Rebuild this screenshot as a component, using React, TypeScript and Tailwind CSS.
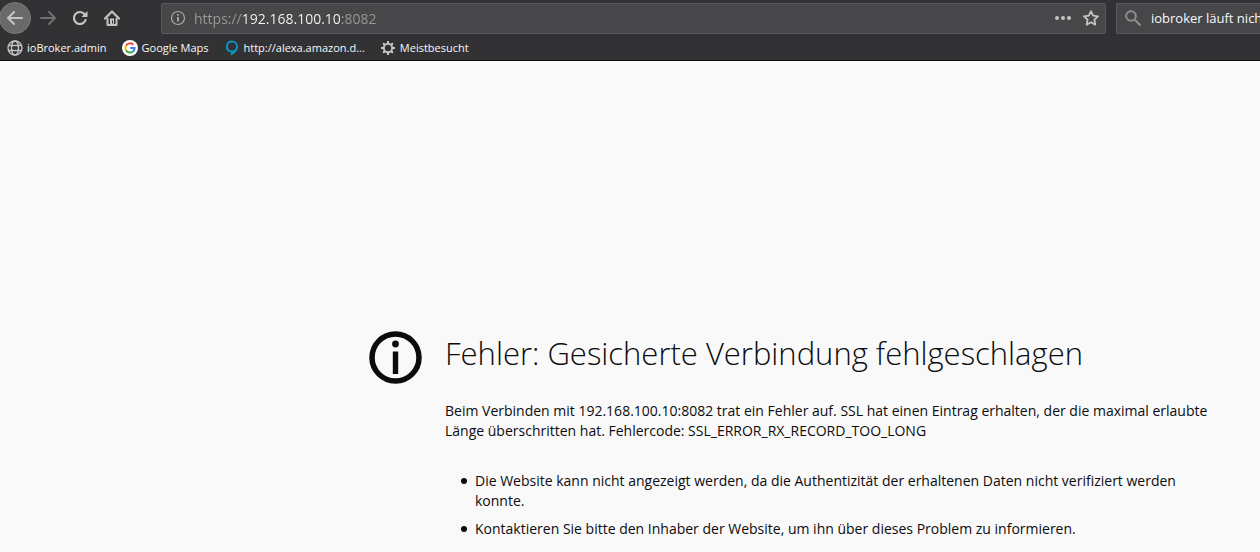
import type { ReactNode } from "react";

interface Bookmark {
  label: string;
  href: string;
  icon: ReactNode;
}

function BackIcon() {
  return (
    <svg viewBox="0 0 16 16" className="size-4" fill="none" stroke="currentColor" strokeWidth="2" strokeLinecap="round" strokeLinejoin="round">
      <path d="M15 8H1.5M7 2 1 8l6 6" />
    </svg>
  );
}

function ForwardIcon() {
  return (
    <svg viewBox="0 0 16 16" className="size-4" fill="none" stroke="currentColor" strokeWidth="2" strokeLinecap="round" strokeLinejoin="round">
      <path d="M1 8h13.5M9 2l6 6-6 6" />
    </svg>
  );
}

function ReloadIcon() {
  return (
    <svg viewBox="0 0 16 16" className="size-4">
      <path d="M12.6 4.2A6 6 0 1 0 13.6 10" fill="none" stroke="currentColor" strokeWidth="2.2" strokeLinecap="round" />
      <path d="M15.5 1v5.5a.6.6 0 0 1-.6.6H9.4z" fill="currentColor" />
    </svg>
  );
}

function HomeIcon() {
  return (
    <svg viewBox="0 0 16 16" className="size-4">
      <path d="M1 8.500 8 1.500l7 7" fill="none" stroke="currentColor" strokeWidth="2.200" strokeLinecap="round" strokeLinejoin="round" />
      <path d="M3.500 8v7h9V8" fill="none" stroke="currentColor" strokeWidth="2" strokeLinejoin="round" />
      <path d="M6 8.500h4V15H6z" fill="currentColor" />
      <path d="M8 10.500h1v3H8z" fill="#323234" />
    </svg>
  );
}

function InfoIcon() {
  return (
    <svg viewBox="0 0 16 16" className="size-4 shrink-0" fill="none" stroke="currentColor">
      <circle cx="8" cy="8" r="6.500" strokeWidth="1.200" />
      <path d="M8 7v4.500" strokeWidth="1.800" />
      <circle cx="8" cy="4.800" r="1" fill="currentColor" stroke="none" />
    </svg>
  );
}

function StarIcon() {
  return (
    <svg viewBox="0 0 16 16" className="size-4" fill="none" stroke="currentColor" strokeWidth="1.800" strokeLinejoin="round">
      <path d="m8 1.200 2.100 4.400 4.900.7-3.600 3.400.9 5L8 12.300l-4.300 2.400.9-5L1 6.300l4.900-.7z" />
    </svg>
  );
}

function SearchIcon() {
  return (
    <svg viewBox="0 0 16 16" className="size-4 shrink-0" fill="none" stroke="currentColor" strokeWidth="2" strokeLinecap="round">
      <circle cx="6" cy="6" r="4.800" />
      <path d="m9.800 9.800 5.200 5.200" />
    </svg>
  );
}

function GlobeIcon() {
  return (
    <svg viewBox="0 0 16 16" className="size-4 text-[#c4c4c5]" fill="none" stroke="currentColor" strokeWidth="1.400">
      <circle cx="8" cy="8" r="7" />
      <ellipse cx="8" cy="8" rx="3.500" ry="7" />
      <path d="M1.600 5.500h12.800M1.600 10.500h12.800" />
    </svg>
  );
}

function GoogleIcon() {
  return (
    <svg viewBox="0 0 16 16" className="size-4" fill="none" strokeWidth="2">
      <circle cx="8" cy="8" r="8" fill="#fff" />
      <path d="M11.300 4.700A4.600 4.600 0 0 0 4 5.700" stroke="#ea4335" />
      <path d="M4 5.700a4.600 4.600 0 0 0 0 4.600" stroke="#fbbc05" />
      <path d="M4 10.300a4.600 4.600 0 0 0 6.900 1.200" stroke="#34a853" />
      <path d="M10.900 11.500a4.600 4.600 0 0 0 1.700-3.400H8.200" stroke="#4285f4" />
    </svg>
  );
}

function AlexaIcon() {
  return (
    <svg viewBox="0 0 16 16" className="size-4">
      <path
        d="M8 .5a6 6 0 0 0-2.200 11.600c.8.300 1.200.8 1.200 1.500V15.500c3.500-1.600 7-4.800 7-9A6 6 0 0 0 8 .5zm0 2a4 4 0 1 1 0 8 4 4 0 0 1 0-8z"
        fill="#0a93bd"
        fillRule="evenodd"
      />
    </svg>
  );
}

function GearIcon() {
  return (
    <svg viewBox="0 0 16 16" className="size-4 text-[#c4c4c5]" fill="none" stroke="currentColor">
      <circle cx="8" cy="8" r="4.200" strokeWidth="2" />
      <path
        d="M8 1v2.500M8 12.500V15M1 8h2.500M12.500 8H15M3.100 3.100l1.700 1.700M11.200 11.200l1.700 1.700M3.100 12.900l1.700-1.700M11.200 4.800l1.700-1.700"
        strokeWidth="2"
      />
    </svg>
  );
}

const BOOKMARKS: Bookmark[] = [
  { label: "ioBroker.admin", href: "#admin", icon: <GlobeIcon /> },
  { label: "Google Maps", href: "#maps", icon: <GoogleIcon /> },
  { label: "http://alexa.amazon.d...", href: "#alexa", icon: <AlexaIcon /> },
  { label: "Meistbesucht", href: "#most-visited", icon: <GearIcon /> },
];

const HINTS = [
  "Die Website kann nicht angezeigt werden, da die Authentizität der erhaltenen Daten nicht verifiziert werden konnte.",
  "Kontaktieren Sie bitte den Inhaber der Website, um ihn über dieses Problem zu informieren.",
];

function Toolbar() {
  return (
    <div className="flex h-9 items-center text-[#c4c4c5]">
      <button aria-label="Zurück" className="-ml-px flex size-8 shrink-0 items-center justify-center rounded-full border border-[#7b7b7d] bg-[#69696a]">
        <BackIcon />
      </button>
      <button aria-label="Vor" disabled className="ml-px flex size-8 shrink-0 items-center justify-center text-[#707072]">
        <ForwardIcon />
      </button>
      <button aria-label="Neu laden" className="flex size-8 shrink-0 items-center justify-center">
        <ReloadIcon />
      </button>
      <button aria-label="Startseite" className="flex size-8 shrink-0 items-center justify-center">
        <HomeIcon />
      </button>

      <div className="ml-[33px] flex h-[31px] min-w-0 flex-1 items-center rounded-xs border border-[#5a5a5c] bg-[#474749] pl-2">
        <span className="text-[#aaaaab]">
          <InfoIcon />
        </span>
        {/* scheme and port are dimmed, only the host is bright */}
        <input
          aria-label="Adresse"
          defaultValue="https://192.168.100.10:8082"
          className="ml-2 min-w-0 flex-1 bg-[linear-gradient(to_right,#9a9a9b_47px,#f9f9fa_47px,#f9f9fa_147px,#9a9a9b_147px)] bg-clip-text pt-0.5 text-sm text-transparent outline-none"
        />
        <button aria-label="Seitenaktionen" className="flex h-6 w-7 items-center justify-center">
          <svg viewBox="0 0 16 16" className="size-4" fill="currentColor">
            <circle cx="2" cy="8" r="2" />
            <circle cx="8" cy="8" r="2" />
            <circle cx="14" cy="8" r="2" />
          </svg>
        </button>
        <button aria-label="Lesezeichen hinzufügen" className="flex h-6 w-7 items-center justify-center">
          <StarIcon />
        </button>
      </div>

      <div className="ml-2.5 flex h-[31px] w-36 shrink-0 items-center rounded-l-xs border border-r-0 border-[#5a5a5c] bg-[#474749] pl-2">
        <span className="text-[#8f8f91]">
          <SearchIcon />
        </span>
        <input aria-label="Suchen" defaultValue="iobroker läuft nicht" className="ml-2.5 min-w-0 flex-1 pt-0.5 text-[13px] text-[#f9f9fa] outline-none" />
      </div>
    </div>
  );
}

export default function App() {
  return (
    <div className="min-h-screen overflow-hidden bg-[#f9f9fa] font-['Open_Sans','Noto_Sans',sans-serif] text-[#0c0c0d]">
      <header className="border-b border-[#0c0c0d] bg-[#323234]">
        <Toolbar />
        <nav className="flex h-6 items-center gap-[15px] pl-[7px]">
          {BOOKMARKS.map((b) => (
            <a key={b.label} href={b.href} className="flex items-center gap-1 text-[11px] whitespace-nowrap text-[#f9f9fa]">
              {b.icon}
              {b.label}
            </a>
          ))}
        </nav>
      </header>

      <main className="flex gap-[23px] pt-[270px] pr-10 pl-[369px]">
        <svg viewBox="0 0 53 53" className="size-[53px] shrink-0">
          <circle cx="26.500" cy="26.500" r="23.500" fill="none" stroke="#0c0c0d" strokeWidth="5.500" />
          <circle cx="26.500" cy="13" r="3.400" fill="#0c0c0d" />
          <path d="M23.800 20.500h5.400v22.500h-5.400z" fill="#0c0c0d" />
        </svg>
        <div className="max-w-[774px] text-sm leading-5">
          <h1 className="text-[31px] leading-[44px] font-light">Fehler: Gesicherte Verbindung fehlgeschlagen</h1>
          <p className="mt-[26px]">
            Beim Verbinden mit 192.168.100.10:8082 trat ein Fehler auf. SSL hat einen Eintrag erhalten, der die maximal erlaubte
            Länge überschritten hat. Fehlercode: SSL_ERROR_RX_RECORD_TOO_LONG
          </p>
          <ul className="mt-[30px] flex list-none flex-col gap-2">
            {HINTS.map((hint) => (
              <li key={hint} className="flex">
                <span className="mt-[7px] mr-2 ml-4 size-1.5 shrink-0 rounded-full bg-[#0c0c0d]" />
                {hint}
              </li>
            ))}
          </ul>
        </div>
      </main>
    </div>
  );
}
